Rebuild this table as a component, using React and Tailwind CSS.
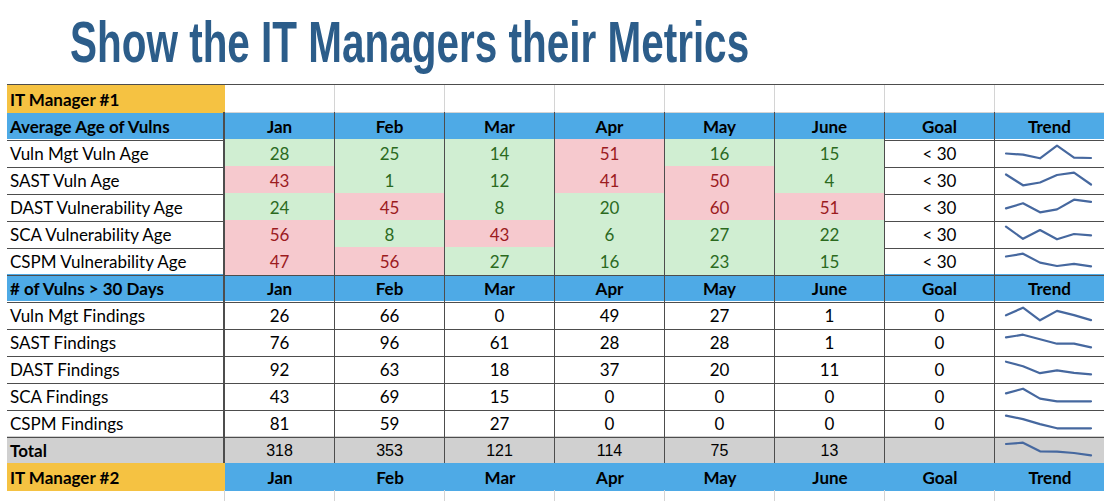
import React from 'react';

const months = ['Jan', 'Feb', 'Mar', 'Apr', 'May', 'June'];

const ageRows = [
  ['Vuln Mgt Vuln Age', [28, 25, 14, 51, 16, 15]],
  ['SAST Vuln Age', [43, 1, 12, 41, 50, 4]],
  ['DAST Vulnerability Age', [24, 45, 8, 20, 60, 51]],
  ['SCA Vulnerability Age', [56, 8, 43, 6, 27, 22]],
  ['CSPM Vulnerability Age', [47, 56, 27, 16, 23, 15]],
];

const countRows = [
  ['Vuln Mgt Findings', [26, 66, 0, 49, 27, 1]],
  ['SAST Findings', [76, 96, 61, 28, 28, 1]],
  ['DAST Findings', [92, 63, 18, 37, 20, 11]],
  ['SCA Findings', [43, 69, 15, 0, 0, 0]],
  ['CSPM Findings', [81, 59, 27, 0, 0, 0]],
];

const totals = [318, 353, 121, 114, 75, 13];

const row = 'grid grid-cols-[218px_repeat(8,110px)] h-[27px]';
const line = 'border-b border-r border-[#4d4d4d]';
const center = 'flex items-center justify-center pt-[2px]';
const first = 'border-b border-r-2 border-[#4d4d4d] pl-[3px] pt-[2px] flex items-center';

function Spark({ values }) {
  const min = Math.min(...values);
  const max = Math.max(...values);
  const pts = values
    .map((v, i) => {
      const y = 19.3 - ((v - min) / (max - min || 1)) * 12.6;
      return `${11 + i * 17},${y.toFixed(1)}`;
    })
    .join(' ');
  return (
    <svg width="110" height="26" viewBox="0 0 110 26" className="block">
      <polyline points={pts} fill="none" stroke="#46689f" strokeWidth="2.2" strokeLinejoin="round" strokeLinecap="round" />
    </svg>
  );
}

function HeaderRow({ label }) {
  return (
    <div className={`${row} bg-[#4eaae6] font-bold`}>
      <div className={first}>{label}</div>
      {[...months, 'Goal', 'Trend'].map((m) => (
        <div key={m} className={`${line} ${center}`}>{m}</div>
      ))}
    </div>
  );
}

function AgeRow({ label, values }) {
  return (
    <div className={row}>
      <div className={first}>{label}</div>
      {values.map((v, i) => (
        <div
          key={i}
          className={`${line} ${center} ${v < 30 ? 'bg-[#d0eed2] text-[#2b6a1e]' : 'bg-[#f6c9ce] text-[#9c1b1e]'}`}
        >
          {v}
        </div>
      ))}
      <div className={`${line} ${center}`}>&lt; 30</div>
      <div className={line}><Spark values={values} /></div>
    </div>
  );
}

function CountRow({ label, values }) {
  return (
    <div className={row}>
      <div className={first}>{label}</div>
      {values.map((v, i) => (
        <div key={i} className={`${line} ${center}`}>{v}</div>
      ))}
      <div className={`${line} ${center}`}>0</div>
      <div className={line}><Spark values={values} /></div>
    </div>
  );
}

export default function App() {
  return (
    <div className="w-[1104px] h-[501px] overflow-hidden bg-white text-black text-[17px] font-['Lato',sans-serif]">
      <div className="h-[84px] pt-[14px] pl-[70px] whitespace-nowrap">
        <span className="inline-block origin-left scale-x-[0.71] text-[57px] leading-[57px] font-bold text-[#2c5d8a] font-['Liberation_Sans',Arial,sans-serif]">
          Show the IT Managers their Metrics
        </span>
      </div>

      <div className="ml-[7px] border-t border-[#4d4d4d]">
        <div className={row}>
          <div className="bg-[#f5c242] font-bold pl-[3px] pt-[2px] flex items-center">IT Manager #1</div>
          {Array.from({ length: 8 }).map((_, i) => (
            <div key={i} className="border-r border-b border-[#d4d4d4]" />
          ))}
        </div>

        <HeaderRow label="Average Age of Vulns" />
        {ageRows.map(([label, values]) => (
          <AgeRow key={label} label={label} values={values} />
        ))}

        <HeaderRow label="# of Vulns > 30 Days" />
        {countRows.map(([label, values]) => (
          <CountRow key={label} label={label} values={values} />
        ))}

        <div className={`${row} bg-[#d0d0d0]`}>
          <div className={`${first} font-bold`}>Total</div>
          {totals.map((v, i) => (
            <div key={i} className={`${line} ${center} font-['Liberation_Sans',Arial,sans-serif] text-[16px]`}>{v}</div>
          ))}
          <div className={line} />
          <div className={line}><Spark values={totals} /></div>
        </div>

        <div className={`${row} font-bold`}>
          <div className="bg-[#f5c242] pl-[3px] pt-[2px] flex items-center">IT Manager #2</div>
          {[...months, 'Goal', 'Trend'].map((m) => (
            <div key={m} className={`bg-[#4eaae6] ${center}`}>{m}</div>
          ))}
        </div>

        <div className={row}>
          <div className="border-r border-[#d4d4d4]" />
          {Array.from({ length: 8 }).map((_, i) => (
            <div key={i} className="border-r border-[#d4d4d4]" />
          ))}
        </div>
      </div>
    </div>
  );
}
